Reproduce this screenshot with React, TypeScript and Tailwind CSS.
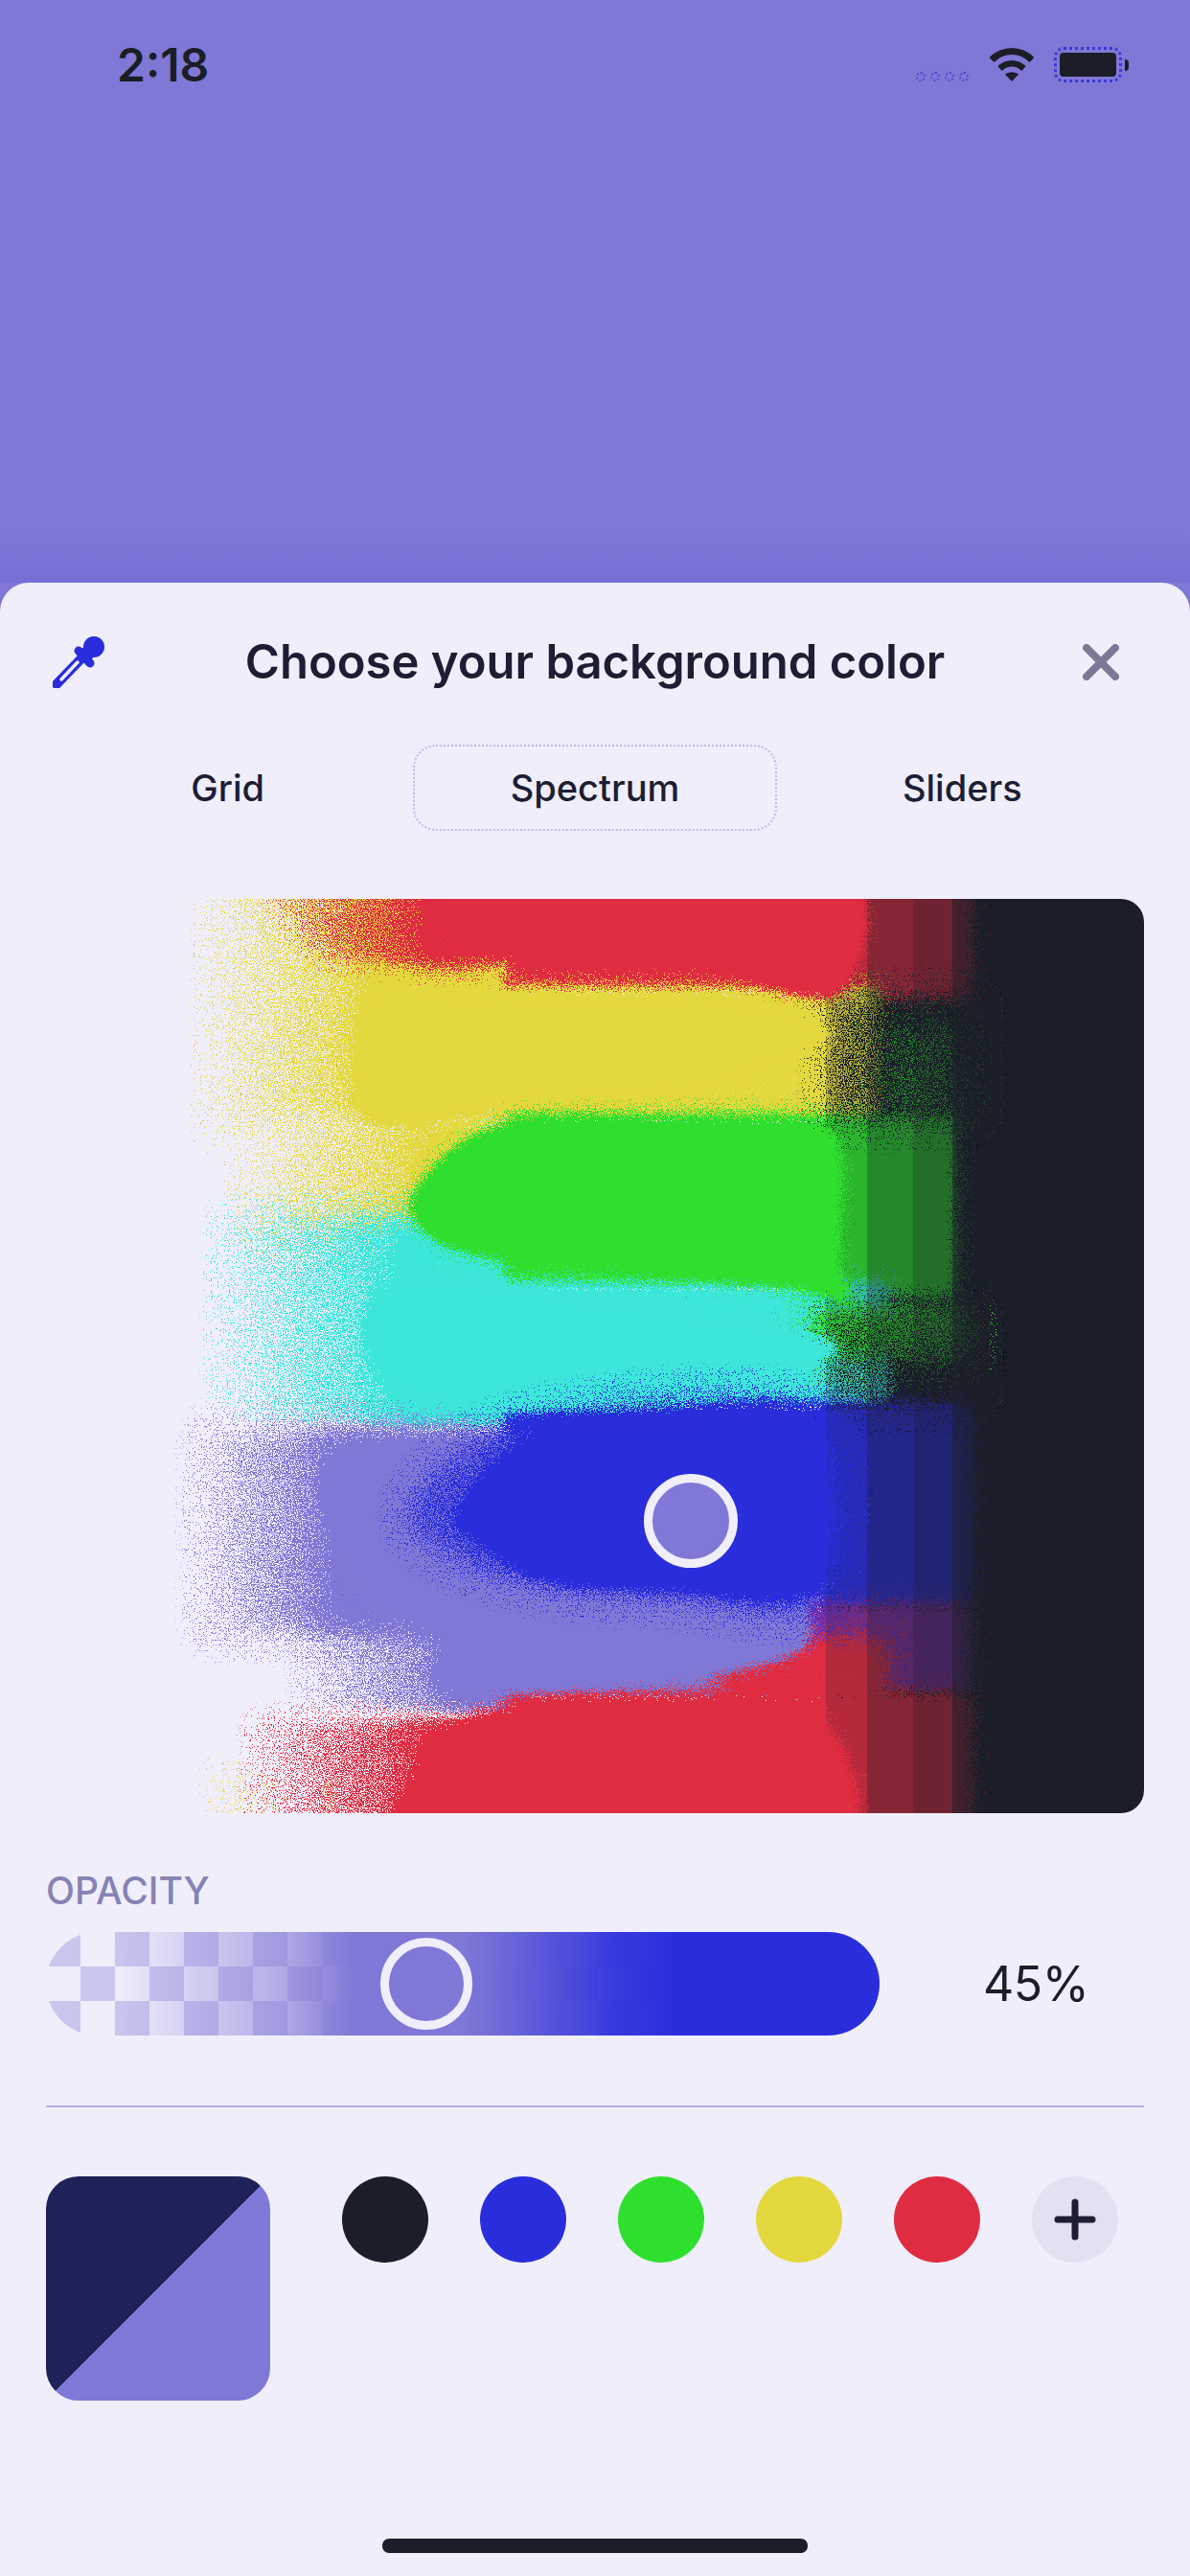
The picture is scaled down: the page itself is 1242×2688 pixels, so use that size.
import React from 'react';

const RED = '#df2c41';
const YELLOW = '#e3d83e';
const GREEN = '#2fdf2e';
const CYAN = '#3de6da';
const BLUE = '#2a2ddb';
const LAVENDER = '#8078d6';
const DARK = '#1b1e28';

// closed catmull-rom curve through the points
function smooth(pts: number[][]) {
    const n = pts.length;
    let d = `M${pts[0][0]} ${pts[0][1]}`;
    for (let i = 0; i < n; i++) {
        const p0 = pts[(i - 1 + n) % n];
        const p1 = pts[i];
        const p2 = pts[(i + 1) % n];
        const p3 = pts[(i + 2) % n];
        const c1x = p1[0] + (p2[0] - p0[0]) / 6;
        const c1y = p1[1] + (p2[1] - p0[1]) / 6;
        const c2x = p2[0] - (p3[0] - p1[0]) / 6;
        const c2y = p2[1] - (p3[1] - p1[1]) / 6;
        d += ` C${c1x} ${c1y} ${c2x} ${c2y} ${p2[0]} ${p2[1]}`;
    }
    return d + 'Z';
}

function rect(x1: number, y1: number, x2: number, y2: number) {
    return `M${x1} ${y1}H${x2}V${y2}H${x1}Z`;
}

const filters = [
    { id: 'wide', blur: 16, seed: 3 },
    { id: 'wide2', blur: 14, seed: 11 },
    { id: 'mid', blur: 9, seed: 7 },
    { id: 'edge', blur: 6, seed: 5 },
    { id: 'edge2', blur: 6, seed: 19 }
];

const fades = [
    { id: 'fadeYellow', color: YELLOW, from: 175, to: 345 },
    { id: 'fadeYellowLow', color: YELLOW, from: 210, to: 400 },
    { id: 'fadeRed', color: RED, from: 225, to: 400 },
    { id: 'fadeRedLow', color: RED, from: 215, to: 400 },
    { id: 'fadeCyan', color: CYAN, from: 185, to: 370 },
    { id: 'fadeLav', color: LAVENDER, from: 160, to: 300 },
    { id: 'fadeLav2', color: LAVENDER, from: 265, to: 430 },
    { id: 'fadeYellow2', color: YELLOW, from: 175, to: 300 }
];

const layers = [
    // left tints
    { d: rect(175, -60, 520, 240), fill: 'url(#fadeYellow)', f: 'wide' },
    { d: rect(210, 220, 520, 350), fill: 'url(#fadeYellowLow)', f: 'wide' },
    { d: smooth([[225, -60], [420, -60], [490, 60], [320, 65], [260, 30]]), fill: 'url(#fadeRed)', f: 'mid' },
    { d: rect(185, 330, 520, 560), fill: 'url(#fadeCyan)', f: 'wide2' },
    { d: rect(160, 550, 520, 770), fill: 'url(#fadeLav)', f: 'wide2' },
    { d: rect(265, 745, 520, 850), fill: 'url(#fadeLav2)', f: 'mid' },
    { d: rect(175, 905, 320, 1000), fill: 'url(#fadeYellow2)', o: 0.5, f: 'mid' },
    { d: rect(215, 855, 520, 1000), fill: 'url(#fadeRedLow)', f: 'mid' },

    // solid black end of the field, also behind the stepped part
    { d: rect(810, -20, 1170, 980), fill: DARK },

    // stacked bands behind the solid shapes, so neighbours touch
    { d: rect(480, -40, 965, 105), fill: RED, f: 'mid' },
    { d: rect(480, 92, 870, 240), fill: YELLOW, f: 'mid' },
    { d: rect(870, 130, 950, 232), fill: GREEN, o: 0.6, f: 'wide' },
    { d: rect(480, 225, 950, 415), fill: GREEN, f: 'mid' },
    { d: rect(480, 400, 880, 535), fill: CYAN, f: 'mid' },
    { d: rect(800, 425, 960, 480), fill: GREEN, f: 'wide' },
    { d: rect(480, 525, 965, 745), fill: BLUE, f: 'mid' },
    { d: rect(480, 725, 815, 840), fill: LAVENDER, f: 'mid' },
    { d: rect(790, 735, 965, 830), fill: '#7d2fa6', f: 'mid' },
    { d: rect(700, 770, 880, 845), fill: RED, f: 'wide2' },
    { d: rect(480, 828, 965, 1000), fill: RED, f: 'mid' },

    // stepped darkening
    { d: rect(814, -20, 857, 980), fill: DARK, o: 0.22 },
    { d: rect(857, -20, 905, 980), fill: DARK, o: 0.45 },
    { d: rect(905, -20, 946, 980), fill: DARK, o: 0.58 },
    { d: rect(946, -20, 985, 980), fill: DARK, o: 0.8 },
    { d: rect(815, 100, 975, 235), fill: DARK, o: 0.45, f: 'wide2' },
    { d: rect(815, 430, 975, 530), fill: DARK, o: 0.4, f: 'wide2' },

    // solid shapes
    { d: smooth([[285, 632], [305, 576], [440, 562], [640, 590], [798, 757], [677, 813], [420, 826], [405, 770], [325, 720]]), fill: LAVENDER, f: 'edge' },
    { d: smooth([[393, -40], [812, -40], [829, 98], [677, 76], [481, 63]]), fill: RED, f: 'edge2' },
    { d: smooth([[393, 994], [393, 895], [474, 845], [677, 838], [812, 857], [812, 994]]), fill: RED, f: 'edge' },
    { d: smooth([[335, 88], [440, 101], [643, 101], [778, 113], [812, 151], [677, 201], [508, 213], [335, 232]]), fill: YELLOW, f: 'edge' },
    { d: smooth([[360, 398], [643, 426], [805, 457], [819, 476], [744, 513], [609, 532], [366, 520]]), fill: CYAN, f: 'edge2' },
    { d: smooth([[383, 307], [467, 238], [643, 232], [798, 238], [829, 263], [829, 382], [839, 420], [778, 407], [643, 394], [467, 376], [399, 351]]), fill: GREEN, f: 'edge' },
    { d: smooth([[376, 632], [500, 540], [800, 530], [810, 735], [643, 733], [521, 722], [420, 690]]), fill: BLUE, f: 'wide2', o: 0.55 },
    { d: smooth([[427, 638], [508, 557], [643, 548], [792, 548], [805, 720], [643, 723], [521, 713], [454, 676]]), fill: BLUE, f: 'edge2' }
];

function SpectrumField() {
    return (
        <svg width="1146" height="954" viewBox="0 0 1146 954" className="block">
            <defs>
                {filters.map((f) => (
                    <filter
                        key={f.id}
                        id={f.id}
                        filterUnits="userSpaceOnUse"
                        x="0"
                        y="0"
                        width="1146"
                        height="954"
                        colorInterpolationFilters="sRGB"
                    >
                        <feGaussianBlur in="SourceGraphic" stdDeviation={f.blur} result="soft" />
                        <feTurbulence type="fractalNoise" baseFrequency="0.83" numOctaves="2" seed={f.seed} result="noise" />
                        <feColorMatrix in="noise" type="matrix" values="0 0 0 0 0  0 0 0 0 0  0 0 0 0 0  2.6 0 0 0 -0.8" result="grain" />
                        <feComposite in="soft" in2="grain" operator="arithmetic" k1="0" k2="1.15" k3="1" k4="-1" result="sum" />
                        <feComponentTransfer in="sum" result="mask">
                            <feFuncA type="linear" slope="255" />
                        </feComponentTransfer>
                        <feComponentTransfer in="soft" result="solid">
                            <feFuncA type="linear" slope="60" />
                        </feComponentTransfer>
                        <feComposite in="solid" in2="mask" operator="in" />
                    </filter>
                ))}
                {fades.map((g) => (
                    <linearGradient key={g.id} id={g.id} gradientUnits="userSpaceOnUse" x1={g.from} x2={g.to} y1="0" y2="0">
                        <stop offset="0" stopColor={g.color} stopOpacity="0.08" />
                        <stop offset="0.35" stopColor={g.color} stopOpacity="0.35" />
                        <stop offset="0.8" stopColor={g.color} stopOpacity="0.6" />
                        <stop offset="1" stopColor={g.color} stopOpacity="0.95" />
                    </linearGradient>
                ))}
            </defs>
            {layers.map((l, i) => (
                <path key={i} d={l.d} fill={l.fill} fillOpacity={l.o ?? 1} filter={l.f ? `url(#${l.f})` : undefined} />
            ))}
        </svg>
    );
}

function Dropper() {
    return (
        <svg width="54" height="54" viewBox="0 0 54 54" fill="none">
            <circle cx="43" cy="11" r="11" fill={BLUE} />
            <path d="M43 11 L33 21" stroke={BLUE} strokeWidth="15" />
            <path d="M27 15 L39 28" stroke={BLUE} strokeWidth="9" strokeLinecap="round" />
            <path d="M4 50 L30 23" stroke={BLUE} strokeWidth="10" strokeLinecap="round" />
            <path d="M9 45 L26 27" stroke="#f0eefb" strokeWidth="3.500" strokeLinecap="round" />
        </svg>
    );
}

function Wifi() {
    return (
        <svg width="48" height="36" viewBox="0 0 48 36" fill="none">
            <path d="M3 13.500 C15 1.500 33 1.500 45 13.500" stroke={DARK} strokeWidth="7" />
            <path d="M11.500 22.500 C19 15.500 29 15.500 36.500 22.500" stroke={DARK} strokeWidth="6.500" />
            <path d="M24 36 L17 28.500 C21 25.500 27 25.500 31 28.500Z" fill={DARK} />
        </svg>
    );
}

function Thumb({ className }: { className: string }) {
    return <div className={`absolute rounded-full border-[9px] border-[#f0eefb] bg-[#8078d6] ${className}`} />;
}

const swatches = ['bg-[#1b1e28]', 'bg-[#2a2ddb]', 'bg-[#2fdf2e]', 'bg-[#e3d83e]', 'bg-[#df2c41]'];

export default function App() {
    return (
        <div className="flex h-[2688px] w-[1242px] flex-col overflow-hidden bg-[#8078d6] [font-family:Inter,sans-serif] text-[#1d1d33]">
            <div className="flex h-[558px] shrink-0 items-start pt-[40px] pl-[122px] pr-[64px]">
                <span className="text-[48px] leading-[56px] font-semibold text-[#1b1e28]">2:18</span>
                <div className="ml-auto flex items-start">
                    <div className="mt-[35px] flex gap-[5px]">
                        <div className="h-[10px] w-[10px] rounded-full border-2 border-dotted border-[#4a48d8]" />
                        <div className="h-[10px] w-[10px] rounded-full border-2 border-dotted border-[#4a48d8]" />
                        <div className="h-[10px] w-[10px] rounded-full border-2 border-dotted border-[#4a48d8]" />
                        <div className="h-[10px] w-[10px] rounded-full border-2 border-dotted border-[#4a48d8]" />
                    </div>
                    <div className="mt-[9px] ml-[21px]">
                        <Wifi />
                    </div>
                    <div className="mt-[9px] ml-[20px] flex items-center">
                        <div className="h-[37px] w-[71px] rounded-[10px] border-[3px] border-dotted border-[#3a3ad8] p-[3px]">
                            <div className="h-full w-full rounded-[4px] bg-[#1b1e28]" />
                        </div>
                        <div className="ml-[3px] h-[12px] w-[4px] rounded-r-full bg-[#1b1e28]" />
                    </div>
                </div>
            </div>
            <div className="h-[50px] shrink-0 bg-linear-to-b from-[#8078d6] to-[#756fd6]" />

            <div className="flex flex-1 flex-col rounded-t-[30px] bg-[#f0eefb] px-[48px]">
                <div className="mt-[53px] -mx-[48px] grid h-[60px] grid-cols-[1fr_auto_1fr] items-center px-[55px]">
                    <Dropper />
                    <h1 className="text-[49px] leading-[60px] font-semibold text-[#1d1d33]">Choose your background color</h1>
                    <svg width="38" height="38" viewBox="0 0 38 38" className="mr-[19px] justify-self-end" fill="none">
                        <path d="M4 4 L34 34 M34 4 L4 34" stroke="#7b7996" strokeWidth="8" strokeLinecap="round" />
                    </svg>
                </div>

                <div className="mt-[56px] -mx-[2px] grid h-[90px] grid-cols-3 text-[38px] font-medium">
                    <div className="flex items-center justify-center">Grid</div>
                    <div className="mx-auto flex w-[380px] items-center justify-center rounded-[24px] border-2 border-dotted border-[#bdbaed]">Spectrum</div>
                    <div className="flex items-center justify-center">Sliders</div>
                </div>

                <div className="relative mt-[71px] h-[954px] overflow-hidden rounded-[24px]">
                    <SpectrumField />
                    <Thumb className="top-[600px] left-[624px] h-[98px] w-[98px]" />
                </div>

                <div className="mt-[59px] text-[39px] leading-[44px] font-medium text-[#8583b5]">OPACITY</div>

                <div className="mt-[21px] flex items-center">
                    <div className="relative h-[108px] w-[870px] overflow-hidden rounded-full bg-[repeating-conic-gradient(#f0eefb_0_25%,#c9c6ee_0_50%)] bg-size-[72px_72px]">
                        <div className="h-full w-full bg-[linear-gradient(to_right,rgba(128,120,214,0)_8%,rgba(128,120,214,0.55)_28%,#8078d6_37%,#8078d6_50%,rgba(42,45,219,0.92)_68%,#2a2ddb_76%)]" />
                        <Thumb className="top-[6px] left-[349px] h-[96px] w-[96px]" />
                    </div>
                    <span className="ml-[108px] text-[50px] leading-[60px] tracking-[-0.5px] text-[#1b1e28]">45%</span>
                </div>

                <div className="mt-[73px] h-[2px] shrink-0 bg-[#b4b0e8]" />

                <div className="mt-[72px] flex h-[234px] shrink-0 items-start">
                    <div className="h-[234px] w-[234px] rounded-[34px] bg-[linear-gradient(135deg,#1f2258_50%,#8078d6_50%)]" />
                    <div className="ml-[75px] flex gap-[54px]">
                        {swatches.map((s) => (
                            <div key={s} className={`h-[90px] w-[90px] rounded-full ${s}`} />
                        ))}
                        <div className="flex h-[90px] w-[90px] items-center justify-center rounded-full bg-[#e3e0f2]">
                            <svg width="44" height="44" viewBox="0 0 44 44" fill="none">
                                <path d="M22 4 V40 M4 22 H40" stroke="#1d1d33" strokeWidth="7" strokeLinecap="round" />
                            </svg>
                        </div>
                    </div>
                </div>

                <div className="mx-auto mt-[144px] h-[15px] w-[444px] shrink-0 rounded-[7px] bg-[#1b1e28]" />
            </div>
        </div>
    );
}
